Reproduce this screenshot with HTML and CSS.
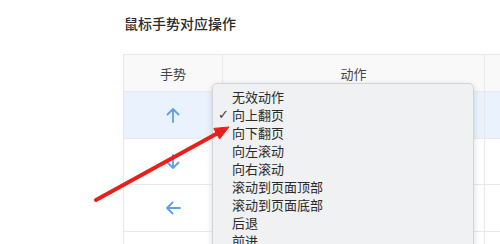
FILE: index.html
```html
<!DOCTYPE html>
<html lang="zh-CN">
<head>
    <meta charset="UTF-8">
    <meta name="viewport" content="width=device-width, initial-scale=1.0">
    <title>鼠标手势对应操作</title>
    <link rel="stylesheet" href="styles.css">
</head>
<body>
    <div class="page">
        <h2 class="title">鼠标手势对应操作</h2>
        <div class="table-wrap">
            <table class="gesture-table">
                <thead>
                    <tr>
                        <th class="col-gesture">手势</th>
                        <th class="col-action">动作</th>
                        <th class="col-extra"></th>
                    </tr>
                </thead>
                <tbody>
                    <tr class="selected">
                        <td>
                            <svg class="gesture-icon" viewBox="0 0 16 16"><path d="M8 15V2M2.5 7.5L8 2l5.5 5.5"/></svg>
                        </td>
                        <td></td>
                        <td></td>
                    </tr>
                    <tr>
                        <td>
                            <svg class="gesture-icon" viewBox="0 0 16 16"><path d="M8 1v13M2.5 8.5L8 14l5.5-5.5"/></svg>
                        </td>
                        <td></td>
                        <td></td>
                    </tr>
                    <tr>
                        <td>
                            <svg class="gesture-icon" viewBox="0 0 16 16"><path d="M15 8H2M7.5 2.5L2 8l5.5 5.5"/></svg>
                        </td>
                        <td></td>
                        <td></td>
                    </tr>
                    <tr>
                        <td></td>
                        <td></td>
                        <td></td>
                    </tr>
                </tbody>
            </table>

            <ul class="menu">
                <li>无效动作</li>
                <li class="checked">向上翻页</li>
                <li>向下翻页</li>
                <li>向左滚动</li>
                <li>向右滚动</li>
                <li>滚动到页面顶部</li>
                <li>滚动到页面底部</li>
                <li>后退</li>
                <li>前进</li>
            </ul>
        </div>

        <svg class="annotation" viewBox="0 0 500 244">
            <line x1="96" y1="200" x2="217" y2="133.5"/>
            <polygon points="229,127 219.6,139 213.8,128.4"/>
        </svg>
    </div>
</body>
</html>
```

FILE: styles.css
```css
* {
    box-sizing: border-box;
    margin: 0;
    padding: 0;
}
html, body {
    width: 500px;
    height: 244px;
    overflow: hidden;
    background-color: #FFFFFF;
}
body {
    font-family: "Noto Sans CJK SC", "Noto Sans", sans-serif;
    color: #333333;
}
.page {
    position: relative;
    height: 100%;
    padding: 13px 0 0 123px;
}
.title {
    font-size: 14px;
    line-height: 20px;
    font-weight: 500;
    color: #2b2b2b;
    padding-left: 1px;
    margin-bottom: 21px;
}
.table-wrap {
    position: relative;
}
.gesture-table {
    border-collapse: collapse;
    table-layout: fixed;
    width: 420px;
}
.gesture-table th {
    height: 37px;
    font-size: 13px;
    font-weight: 400;
    color: #444444;
    background-color: #F9F9F9;
    border: 1px solid #E9E9E9;
    text-align: center;
}
.col-gesture {
    width: 99px;
}
.col-action {
    width: 262px;
}
.gesture-table td {
    height: 47px;
    border: 1px solid #E9E9E9;
    text-align: center;
    vertical-align: middle;
}
.gesture-table tbody tr:nth-child(2) td {
    height: 46px;
}
.selected td {
    background-color: #E9F2FD;
}
.gesture-icon {
    display: block;
    width: 16px;
    height: 16px;
    margin: 0 auto;
    fill: none;
    stroke: #5E9EF2;
    stroke-width: 1.8;
    stroke-linecap: round;
    stroke-linejoin: round;
}
.menu {
    position: absolute;
    left: 89px;
    top: 29px;
    width: 262px;
    height: 200px;
    list-style: none;
    padding: 4px 0;
    background-color: #F0F1F2;
    border: 1px solid #D3D4D6;
    border-radius: 5px;
    box-shadow: 0 2px 6px rgba(0, 0, 0, 0.15);
}
.menu li {
    position: relative;
    height: 18px;
    line-height: 18px;
    font-size: 13px;
    color: #2a2a2a;
    padding-left: 19px;
}
.menu li.checked::before {
    content: "✓";
    position: absolute;
    left: 5px;
    top: 0;
    font-family: "DejaVu Sans", sans-serif;
    font-size: 13px;
    color: #3a3a3a;
}
.annotation {
    position: absolute;
    left: 0;
    top: 0;
    width: 500px;
    height: 244px;
}
.annotation line {
    stroke: #E8201C;
    stroke-width: 4;
    stroke-linecap: round;
}
.annotation polygon {
    fill: #E8201C;
    stroke: #E8201C;
    stroke-width: 1;
    stroke-linejoin: round;
}
```
